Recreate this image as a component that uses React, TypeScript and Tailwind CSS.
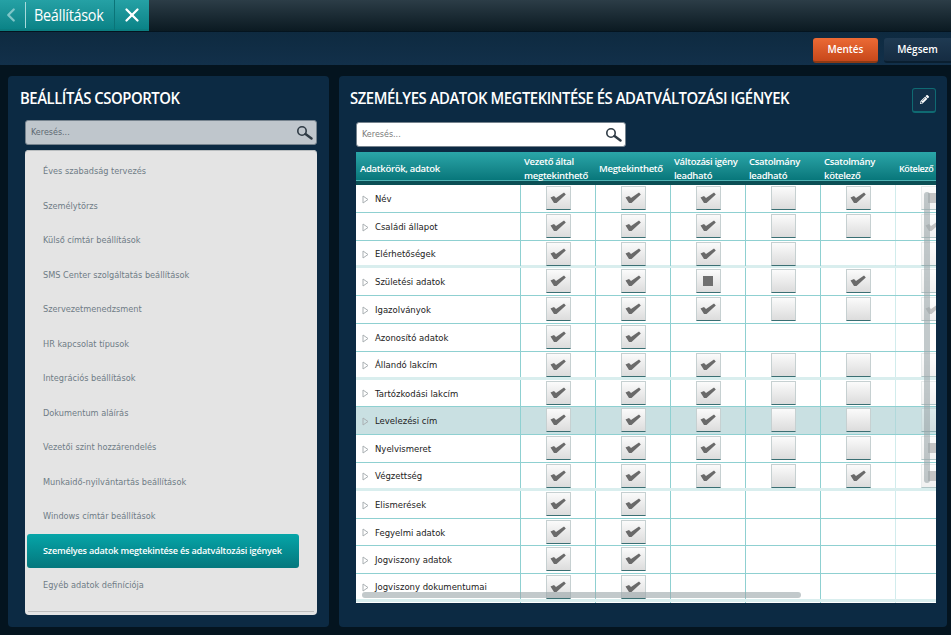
import { ChevronLeft, X } from 'lucide-react'
import { FaPencilAlt } from 'react-icons/fa'

type Mark = 'v' | 'e' | 's' | '-'

const groups = [
  'Éves szabadság tervezés',
  'Személytörzs',
  'Külső címtár beállítások',
  'SMS Center szolgáltatás beállítások',
  'Szervezetmenedzsment',
  'HR kapcsolat típusok',
  'Integrációs beállítások',
  'Dokumentum aláírás',
  'Vezetői szint hozzárendelés',
  'Munkaidő-nyilvántartás beállítások',
  'Windows címtár beállítások',
  'Személyes adatok megtekintése és adatváltozási igények',
  'Egyéb adatok definíciója',
]

const rows: { name: string; marks: string }[] = [
  { name: 'Név', marks: 'vvvevs' },
  { name: 'Családi állapot', marks: 'vvveev' },
  { name: 'Elérhetőségek', marks: 'vvve-e' },
  { name: 'Születési adatok', marks: 'vvseve' },
  { name: 'Igazolványok', marks: 'vvveev' },
  { name: 'Azonosító adatok', marks: 'vv----' },
  { name: 'Állandó lakcím', marks: 'vvveee' },
  { name: 'Tartózkodási lakcím', marks: 'vvveee' },
  { name: 'Levelezési cím', marks: 'vvveee' },
  { name: 'Nyelvismeret', marks: 'vvvees' },
  { name: 'Végzettség', marks: 'vvvevs' },
  { name: 'Elismerések', marks: 'vv----' },
  { name: 'Fegyelmi adatok', marks: 'vv----' },
  { name: 'Jogviszony adatok', marks: 'vv----' },
  { name: 'Jogviszony dokumentumai', marks: 'vv----' },
  { name: '', marks: 'vvvvvv' },
]

function SearchIcon() {
  return (
    <svg width="17" height="15" viewBox="0 0 17 15" fill="none" className="shrink-0">
      <circle cx="6" cy="6" r="4.2" stroke="#2f3b45" strokeWidth="1.6" />
      <path d="M9.5 9 L15.5 13.5" stroke="#2f3b45" strokeWidth="2.4" strokeLinecap="round" />
    </svg>
  )
}

function CheckBox({ mark }: { mark: Mark }) {
  if (mark === '-') return null
  return (
    <div className="flex h-[24px] w-[25px] items-center justify-center border border-[#c6d0d1] border-b-[#3a6f73] bg-gradient-to-b from-[#fbfbfb] to-[#dcdcdc]">
      {mark === 'v' && (
        <svg width="16" height="12" viewBox="0 0 16 12">
          <path d="M0.5 5.5 L4 4 L6 6 L14 0.5 L15.8 2.5 L6.5 11 L4 11 Z" fill="#6a6a6a" />
        </svg>
      )}
      {mark === 's' && <div className="h-[10px] w-[10px] bg-[#6f6f6f]" />}
    </div>
  )
}

function TableRow({ name, marks, index }: { name: string; marks: string; index: number }) {
  const groupEnd = index % 4 === 2
  return (
    <div
      className={`grid h-[27.8px] w-[614px] shrink-0 grid-cols-[164px_repeat(6,75px)] border-b ${
        groupEnd ? 'border-b-[3px] border-[#d9eeee]' : 'border-[#8fd0d1]'
      } ${index === 8 ? 'bg-[#c9e0e2]' : 'bg-white'}`}
    >
      <div className="flex items-center pl-[6px] pt-[2px] font-['DejaVu_Sans',sans-serif] text-[8.5px] text-[#222]">
        {name && (
          <svg width="7" height="9" viewBox="0 0 7 9" fill="none" className="mr-[6px]">
            <path d="M1 1 L6 4.5 L1 8 Z" stroke="#a9afb2" strokeWidth="1" />
          </svg>
        )}
        <span>{name}</span>
      </div>
      {marks.split('').map((m, i) => (
        <div
          key={i}
          className={`flex justify-center border-l border-[#8fd0d1] pt-px ${i === 5 ? 'opacity-40' : ''}`}
        >
          <CheckBox mark={m as Mark} />
        </div>
      ))}
    </div>
  )
}

export default function App() {
  return (
    <div className="flex h-[635px] w-[951px] flex-col overflow-hidden bg-[#04141f] font-['Open_Sans',sans-serif]">
      <div className="flex h-[31px] shrink-0 bg-gradient-to-b from-[#2c3d47] to-[#0b1a22]">
        <div className="flex h-[31px] w-[149px] items-center border-b-[2px] border-[#0b7d80] bg-gradient-to-b from-[#25a1a5] to-[#0a8387] text-white">
          <ChevronLeft size={22} strokeWidth={2.5} className="text-[#7fc6c8]" />
          <div className="ml-[3px] h-[26px] w-px bg-[#a8dadb]" />
          <span className="ml-[8px] w-[80px] origin-left scale-x-90 text-[16px] leading-none tracking-[-0.3px]">Beállítások</span>
          <div className="h-[31px] w-px bg-[#0b7478]" />
          <X size={22} strokeWidth={2.5} className="ml-[6px]" />
        </div>
      </div>

      <div className="mt-px flex h-[33px] shrink-0 items-center justify-end gap-[6px] bg-gradient-to-b from-[#0e2a40] to-[#12304a] pt-[3px]">
        <button className="h-[25px] w-[65px] rounded-[3px] border-b-2 border-[#8e3a14] bg-gradient-to-b from-[#ec6a35] to-[#c7481a] text-[10px] font-semibold text-white">
          Mentés
        </button>
        <button className="h-[25px] w-[67px] rounded-l-[3px] border-b-2 border-[#0a1f30] bg-gradient-to-b from-[#1f3a52] to-[#152c42] text-[10px] font-semibold text-white">
          Mégsem
        </button>
      </div>

      <div className="flex gap-[10px] pl-[8px] pt-[11px]">
        <div className="flex h-[551px] w-[321px] flex-col rounded-[4px] bg-[#0c2a43] pl-[17px] pr-[12px]">
          <h2 className="ml-[-5px] mt-[12px] h-[20px] origin-left scale-x-[.93] whitespace-nowrap text-[16px] font-semibold leading-[20px] tracking-[-0.5px] text-white">
            BEÁLLÍTÁS CSOPORTOK
          </h2>
          <div className="mt-[12px] flex h-[25px] items-center justify-between rounded-[3px] border border-[#76838e] bg-[#bfc6cc] pl-[5px] pr-[3px]">
            <span className="font-['DejaVu_Sans',sans-serif] text-[8px] text-[#5d6872]">Keresés...</span>
            <SearchIcon />
          </div>
          <div className="relative mt-[5px] h-[465px] w-[292px] rounded-[4px] bg-[#e4e4e4] pt-[4px] shadow-[inset_0_1px_0_#b9bdbf]">
            {groups.map((g, i) =>
              i === 11 ? (
                <div
                  key={g}
                  className="ml-[2px] flex h-[34.5px] w-[272px] items-center rounded-[3px] bg-gradient-to-b from-[#06a5a8] to-[#04777d] pl-[16px] text-[9.1px] font-semibold tracking-[-0.2px] text-white"
                >
                  {g}
                </div>
              ) : (
                <div
                  key={g}
                  className="flex h-[34.5px] items-center pl-[18px] font-['DejaVu_Sans',sans-serif] text-[8.2px] text-[#6f7c86]"
                >
                  {g}
                </div>
              ),
            )}
            <div className="absolute bottom-[3px] left-[3px] right-[3px] h-px bg-[#bdbdbd]" />
          </div>
        </div>

        <div className="flex h-[551px] w-[608px] flex-col rounded-[4px] bg-[#0c2a43] pl-[17px]">
          <div className="mt-[12px] flex h-[24px] items-center justify-between pr-[11px]">
            <h2 className="ml-[-6px] mt-[-4px] origin-left scale-x-[.93] whitespace-nowrap text-[16px] font-semibold leading-[20px] tracking-[-0.5px] text-white">
              SZEMÉLYES ADATOK MEGTEKINTÉSE ÉS ADATVÁLTOZÁSI IGÉNYEK
            </h2>
            <button className="flex h-[25px] w-[24px] items-center justify-center rounded-[3px] border border-[#0f6a72] border-b-2 bg-[#123049] text-white">
              <FaPencilAlt size={9} />
            </button>
          </div>
          <div className="mt-[10px] flex h-[25px] w-[270px] items-center justify-between rounded-[3px] border border-[#76838e] bg-white pl-[5px] pr-[3px]">
            <span className="font-['DejaVu_Sans',sans-serif] text-[8px] text-[#7a7a7a]">Keresés...</span>
            <SearchIcon />
          </div>

          <div className="relative mt-[5px] flex h-[451px] w-[580px] flex-col overflow-hidden">
            <div className="grid h-[33px] w-[614px] shrink-0 grid-cols-[164px_repeat(5,75px)_35px] items-center border-b-[4px] border-[#0b4f55] bg-gradient-to-b from-[#2aa6a9] to-[#067579] pt-[3px] text-[9.5px] font-semibold leading-[14px] tracking-[-0.3px] text-white shadow-[inset_0_-1px_0_#4fb3b4]">
              <span className="pl-[4px]">Adatkörök, adatok</span>
              <span className="pl-[4px]">Vezető által<br />megtekinthető</span>
              <span className="pl-[4px]">Megtekinthető</span>
              <span className="pl-[4px]">Változási igény<br />leadható</span>
              <span className="pl-[4px]">Csatolmány<br />leadható</span>
              <span className="pl-[4px]">Csatolmány<br />kötelező</span>
              <span className="whitespace-nowrap pl-[4px] text-[9px] tracking-[-0.4px]">Kötelező</span>
            </div>
            {rows.map((r, i) => (
              <TableRow key={i} name={r.name} marks={r.marks} index={i} />
            ))}
            <div className="absolute left-[6px] top-[440px] h-[6px] w-[439px] rounded-full bg-[#9aa5a8]/60" />
            <div className="absolute left-[568px] top-[40px] h-[291px] w-[6px] rounded-full bg-[#9aa5a8]/60" />
          </div>
        </div>
      </div>
    </div>
  )
}
